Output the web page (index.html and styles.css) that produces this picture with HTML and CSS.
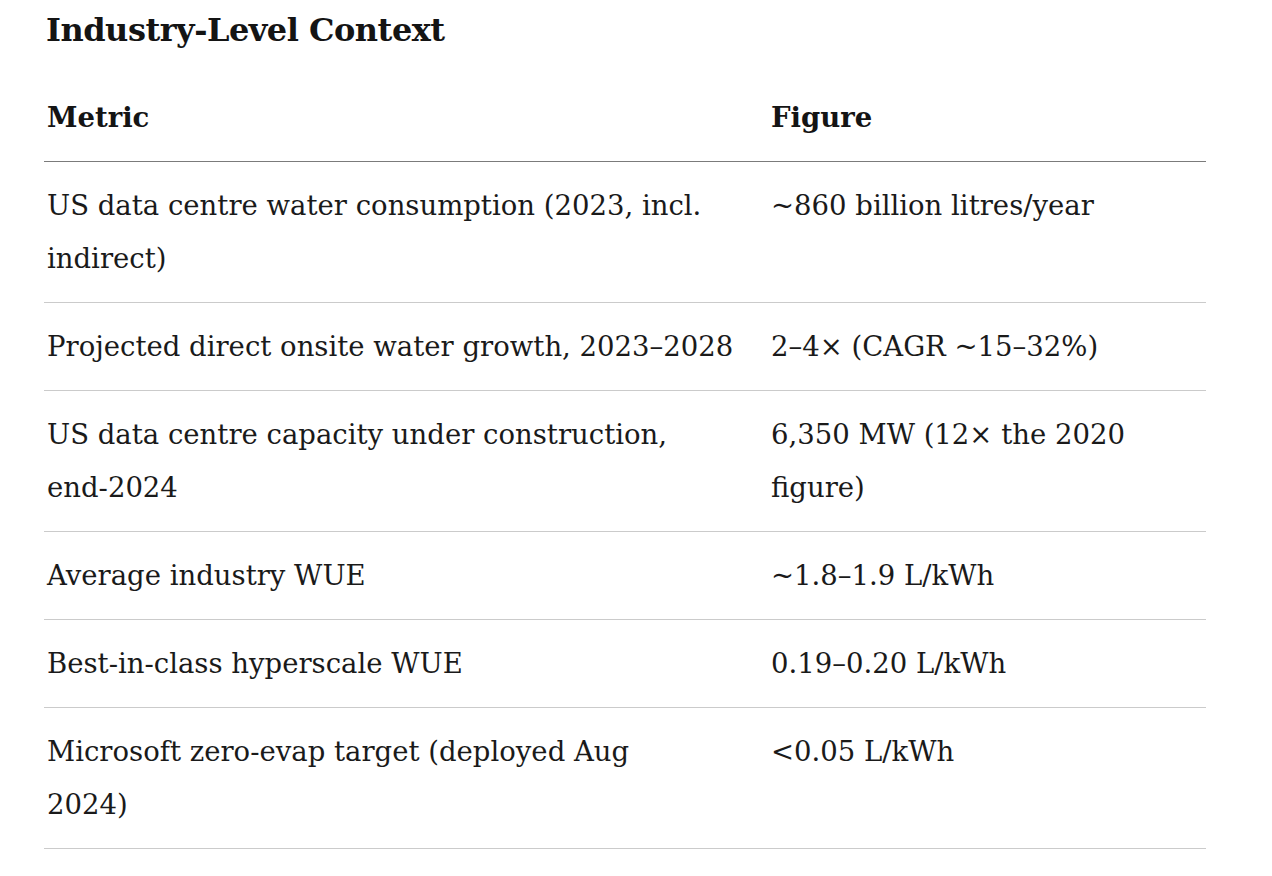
FILE: index.html
```html
<!DOCTYPE html>
<html lang="en">
<head>
<meta charset="utf-8">
<title>Industry-Level Context</title>
<link rel="stylesheet" href="styles.css">
</head>
<body>
<section class="section">
  <h2 class="section-title">Industry-Level Context</h2>
  <table class="data-table">
    <colgroup>
      <col class="col-metric">
      <col class="col-figure">
    </colgroup>
    <thead>
      <tr>
        <th>Metric</th>
        <th>Figure</th>
      </tr>
    </thead>
    <tbody>
      <tr>
        <td>US data centre water consumption (2023, incl.<br>indirect)</td>
        <td>~860 billion litres/year</td>
      </tr>
      <tr>
        <td>Projected direct onsite water growth, 2023–2028</td>
        <td>2–4× (CAGR ~15–32%)</td>
      </tr>
      <tr>
        <td>US data centre capacity under construction,<br><span class="nowrap">end-2024</span></td>
        <td>6,350 MW (12× the 2020<br>figure)</td>
      </tr>
      <tr>
        <td>Average industry WUE</td>
        <td>~1.8–1.9 L/kWh</td>
      </tr>
      <tr>
        <td>Best-in-class hyperscale WUE</td>
        <td>0.19–0.20 L/kWh</td>
      </tr>
      <tr>
        <td>Microsoft zero-evap target (deployed Aug<br>2024)</td>
        <td>&lt;0.05 L/kWh</td>
      </tr>
    </tbody>
  </table>
</section>
</body>
</html>
```
FILE: styles.css
```css
html, body {
  margin: 0;
  padding: 0;
  background: #ffffff;
}

body {
  font-family: "DejaVu Serif", "Liberation Serif", serif;
  color: #1a1a1a;
}

.section {
  padding: 10px 0 0 44px;
  width: 1162px;
}

.section-title {
  margin: 0 0 23px 2px;
  font-size: 32px;
  line-height: 41px;
  font-weight: 700;
  color: #141414;
  letter-spacing: -0.5px;
}

.data-table {
  width: 1162px;
  border-collapse: collapse;
  table-layout: fixed;
}

.col-metric {
  width: 724px;
}

.data-table th,
.data-table td {
  text-align: left;
  vertical-align: top;
  font-size: 27.5px;
  line-height: 53px;
  padding: 17px 4px 17px 3px;
}

.data-table th {
  font-weight: 700;
  color: #141414;
  border-bottom: 1px solid #7b7b7b;
}

.data-table td {
  font-weight: 400;
  border-bottom: 1px solid #cbcbcb;
}

.nowrap {
  white-space: nowrap;
}
```
